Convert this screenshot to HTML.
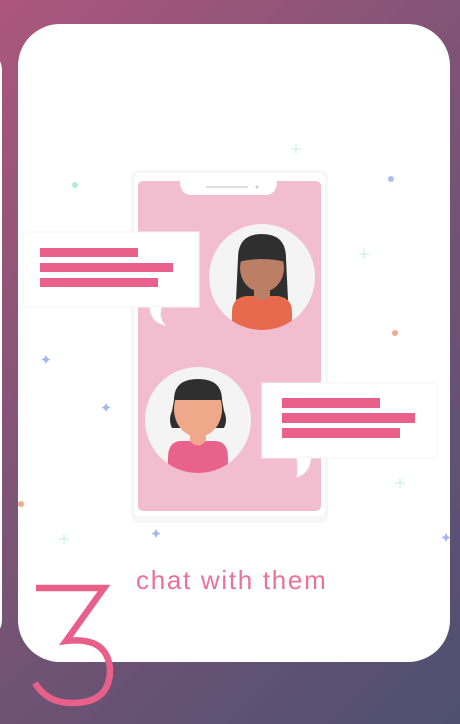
<!DOCTYPE html>
<html><head><style>
html,body{margin:0;padding:0}
body{width:460px;height:724px;overflow:hidden;position:relative;background:linear-gradient(135deg,#ad567d 0%,#7c5475 45%,#4e5070 100%);font-family:"Liberation Sans",sans-serif}
.edge{position:absolute;left:-20px;top:50px;width:22px;height:590px;background:#fff;border-radius:0 20px 20px 0}
.card{position:absolute;left:18px;top:24px;width:432px;height:638px;background:#fff;border-radius:42px}
.txt{position:absolute;left:136px;top:565px;font-size:26px;color:#ec7198;font-weight:300;letter-spacing:1.7px}
</style></head><body>
<div class="edge"></div>
<div class="card"></div>
<svg width="460" height="724" style="position:absolute;left:0;top:0">
<rect x="131" y="170" width="197" height="353" rx="8" fill="#f7f7f7"/>
<rect x="134" y="173" width="191" height="343" rx="6" fill="#fff"/>
<rect x="138" y="181" width="183" height="330" rx="5" fill="#f3bdd0"/>
<path d="M180 181 H277 Q277 195 265 195 H192 Q180 195 180 181Z" fill="#fff"/>
<rect x="206" y="186" width="42" height="2" fill="#ddd"/>
<circle cx="257" cy="187" r="1.5" fill="#ccc"/>
<circle cx="262" cy="277" r="53" fill="#f4f4f4"/>
<clipPath id="c1"><circle cx="262" cy="277" r="53"/></clipPath>
<g clip-path="url(#c1)">
<path d="M238 258 Q238 234 262 234 Q286 234 286 258 L288 300 H236Z" fill="#2f2f2f"/>
<rect x="254" y="282" width="16" height="22" fill="#bb7f66"/>
<path d="M232 312 Q232 298 246 296 L254 296 Q262 304 270 296 L278 296 Q292 298 292 312 V340 H232Z" fill="#e86a4e"/>
<ellipse cx="262" cy="268" rx="22" ry="24" fill="#bb7f66"/>
<path d="M238 262 Q240 236 262 236 Q284 236 286 262 Q262 256 238 262Z" fill="#2f2f2f"/>
</g>
<circle cx="198" cy="420" r="53" fill="#f4f4f4"/>
<clipPath id="c2"><circle cx="198" cy="420" r="53"/></clipPath>
<g clip-path="url(#c2)">
<path d="M174 400 Q174 379 198 379 Q222 379 222 400 L224 411 Q228 420 224 428 L172 428 Q168 420 172 411Z" fill="#2f2f2f"/>
<rect x="190" y="425" width="16" height="22" fill="#efa98a"/>
<path d="M168 458 Q168 442 180 441 L190 441 Q198 450 206 441 L216 441 Q228 442 228 458 V480 H168Z" fill="#e9628b"/>
<ellipse cx="198" cy="409" rx="24" ry="28" fill="#efa98a"/>
<path d="M174 400 Q176 380 198 380 Q220 380 222 400Z" fill="#2f2f2f"/>
</g>
<rect x="23" y="232" width="176" height="75" fill="#fff" stroke="#f4f4f4"/>
<path d="M150 306 Q150 322 165 325 Q158 318 162 306Z" fill="#fff" stroke="#f2f2f2"/>
<rect x="40" y="248" width="98" height="9" fill="#e9608a"/>
<rect x="40" y="263" width="133" height="9" fill="#e9608a"/>
<rect x="40" y="278" width="118" height="9" fill="#e9608a"/>
<rect x="262" y="383" width="175" height="75" fill="#fff" stroke="#f4f4f4"/>
<path d="M297 457 Q298 472 297 477 Q310 473 311 457Z" fill="#fff" stroke="#f2f2f2"/>
<rect x="282" y="398" width="98" height="10" fill="#e9608a"/>
<rect x="282" y="413" width="133" height="10" fill="#e9608a"/>
<rect x="282" y="428" width="118" height="10" fill="#e9608a"/>
<circle cx="75" cy="185" r="3" fill="#b2eed6"/>
<circle cx="391" cy="179" r="3" fill="#a9bff2"/>
<circle cx="395" cy="333" r="3" fill="#f0a891"/>
<circle cx="21" cy="504" r="3" fill="#f0a891"/>
<g stroke="#c9f3e4" stroke-width="1.2"><path d="M296 144v10M291 149h10"/><path d="M364 249v10M359 254h10"/><path d="M400 478v10M395 483h10"/><path d="M64 534v10M59 539h10"/></g>
<g fill="#9fb6ee"><path d="M46 355l1.5 3 3 1.5-3 1.5-1.5 3-1.5-3-3-1.5 3-1.5z"/><path d="M106 403l1.5 3 3 1.5-3 1.5-1.5 3-1.5-3-3-1.5 3-1.5z"/><path d="M156 529l1.5 3 3 1.5-3 1.5-1.5 3-1.5-3-3-1.5 3-1.5z"/><path d="M446 533l1.5 3 3 1.5-3 1.5-1.5 3-1.5-3-3-1.5 3-1.5z"/></g>
<path d="M36 588 H104 L66 641 Q108 636 110 670 Q110 703 72 703 Q47 703 35 683" fill="none" stroke="#e8608a" stroke-width="6.5"/>
</svg>
<div class="txt">chat with them</div>
</body></html>
